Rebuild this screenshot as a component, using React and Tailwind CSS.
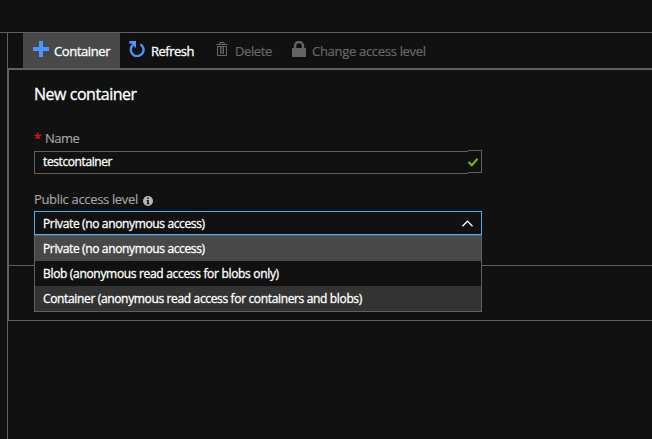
const options = [
  { label: 'Private (no anonymous access)', className: 'bg-[#484848] tracking-[-0.36px]' },
  { label: 'Blob (anonymous read access for blobs only)', className: 'bg-[#111111] tracking-[-0.32px]' },
  { label: 'Container (anonymous read access for containers and blobs)', className: 'bg-[#333333] tracking-[-0.35px]' },
];

function PlusIcon() {
  return (
    <svg className="h-4 w-4" viewBox="0 0 16 16" fill="#4b96f8">
      <path d="M6 0h4v6h6v4h-6v6H6v-6H0V6h6z" />
    </svg>
  );
}

function RefreshIcon() {
  return (
    <svg className="h-4 w-4" viewBox="0 0 16 16" fill="none">
      <path d="M3.6 4.2A6.4 6.4 0 1 0 11.4 3.2" stroke="#4b96f8" strokeWidth="2.4" />
      <path d="M0.3 0H7V7L4.6 5 2.2 2.4H0.3z" fill="#4b96f8" />
    </svg>
  );
}

function TrashIcon() {
  return (
    <svg className="h-[14px] w-3" viewBox="0 0 12 14" fill="none" stroke="#686868">
      <path d="M0.5 2.5h11M4 2V.5h4V2" />
      <path d="M1.5 4v9.5h9V4M1.5 4.5h9" />
      <path d="M4.5 5v7M6 5v7M7.5 5v7" strokeWidth=".9" />
    </svg>
  );
}

function LockIcon() {
  return (
    <svg className="h-4 w-[14px]" viewBox="0 0 14 16">
      <path d="M3 8V5a4 4 0 0 1 8 0v3" fill="none" stroke="#646464" strokeWidth="2.4" />
      <path d="M0 7h14v8q0 1-1 1H1q-1 0-1-1z" fill="#646464" />
    </svg>
  );
}

function InfoIcon() {
  return (
    <svg className="h-[10px] w-[10px]" viewBox="0 0 10 10">
      <circle cx="5" cy="5" r="5" fill="#b8b8b8" />
      <path d="M4.2 1.5h1.6v1.5H4.2zM3.7 4h2.1v3.3h.6v1H3.6v-1h.6V5h-.5z" fill="#111" />
    </svg>
  );
}

export default function App() {
  return (
    <div className="flex h-[439px] w-[652px] flex-col overflow-hidden bg-[#111111] font-['Open_Sans','Noto_Sans',sans-serif] text-white">
      <div className="h-8 shrink-0" />
      <div className="flex grow border-t border-[#606060]">
        <div className="w-[7px] shrink-0" />
        <main className="grow border-l border-[#606060]">
          <div className="flex h-[35px] pl-[15px] text-[13px] leading-[18px]">
            <div className="flex w-[97px] bg-[#484848] pl-[10px] pt-2">
              <PlusIcon />
              <span className="ml-[5px] mt-px tracking-[-0.4px] [-webkit-text-stroke:0.3px_white]">Container</span>
            </div>
            <div className="flex w-[84px] pl-[9px] pt-2">
              <RefreshIcon />
              <span className="ml-[6px] mt-px tracking-[-0.5px] [-webkit-text-stroke:0.3px_white]">Refresh</span>
            </div>
            <div className="flex w-[80px] pl-[12px] pt-[9px] text-[#686868]">
              <TrashIcon />
              <span className="ml-[7px] tracking-[-0.4px] [-webkit-text-stroke:0.2px_#686868]">Delete</span>
            </div>
            <div className="flex pl-2 pt-2 text-[#686868]">
              <LockIcon />
              <span className="ml-[6px] mt-px whitespace-nowrap tracking-[-0.3px] [-webkit-text-stroke:0.2px_#686868]">Change access level</span>
            </div>
          </div>
          <section className="relative h-[253px] border-b border-l border-t-2 border-[#606060] pl-[25px]">
            <h1 className="pt-[12px] text-[16px] leading-6 tracking-[-0.46px] [-webkit-text-stroke:0.3px_white]">New container</h1>
            <div className="mt-[23px] flex h-[19px] text-[13px] leading-[18px] text-[#a5a5a5]">
              <span className="w-[11px] text-[#e81123] [-webkit-text-stroke:0.3px_#e81123]">*</span>
              <span className="tracking-[-0.5px] [-webkit-text-stroke:0.15px_#a5a5a5]">Name</span>
            </div>
            <div className="mt-[2px] flex h-6 w-[448px]">
              <div className="mt-px h-[23px] w-[434px] border-y border-l border-[#606060] pl-2 text-[12px] leading-[20px] tracking-[-0.4px] [-webkit-text-stroke:0.3px_white]">testcontainer</div>
              <div className="h-[23px] w-[14px] border-y border-r border-[#606060]">
                <svg className="mt-[7px] h-[9px] w-[10px]" viewBox="0 0 10 9" fill="none">
                  <path d="M.5 4 3.8 7.3 9.5 .7" stroke="#7fba00" strokeWidth="2" />
                </svg>
              </div>
            </div>
            <div className="mt-[16px] flex h-[21px] text-[13px] leading-[18px] text-[#a5a5a5]">
              <span className="tracking-[-0.34px] [-webkit-text-stroke:0.15px_#a5a5a5]">Public access level</span>
              <span className="ml-[5px] mt-[6px]"><InfoIcon /></span>
            </div>
            <div className="flex h-6 w-[448px] justify-between border border-[#55aaee] pl-2 pr-2 text-[12px] leading-[23px] tracking-[-0.36px] [-webkit-text-stroke:0.3px_white]">
              <span>Private (no anonymous access)</span>
              <svg className="mt-[8px] h-[7px] w-[11px]" viewBox="0 0 11 7" fill="none">
                <path d="M.5 6.2 5.5 1.2 10.5 6.2" stroke="white" strokeWidth="1.3" />
              </svg>
            </div>
            <ul className="relative z-10 h-[77px] w-[448px] border border-[#606060] text-[12px] leading-[26px] [-webkit-text-stroke:0.3px_white]">
              {options.map((option) => (
                <li key={option.label} className={`h-[25px] whitespace-nowrap pl-2 ${option.className}`}>{option.label}</li>
              ))}
            </ul>
            <div className="absolute left-0 right-0 top-[195px] h-px bg-[#606060]" />
          </section>
        </main>
      </div>
    </div>
  );
}
